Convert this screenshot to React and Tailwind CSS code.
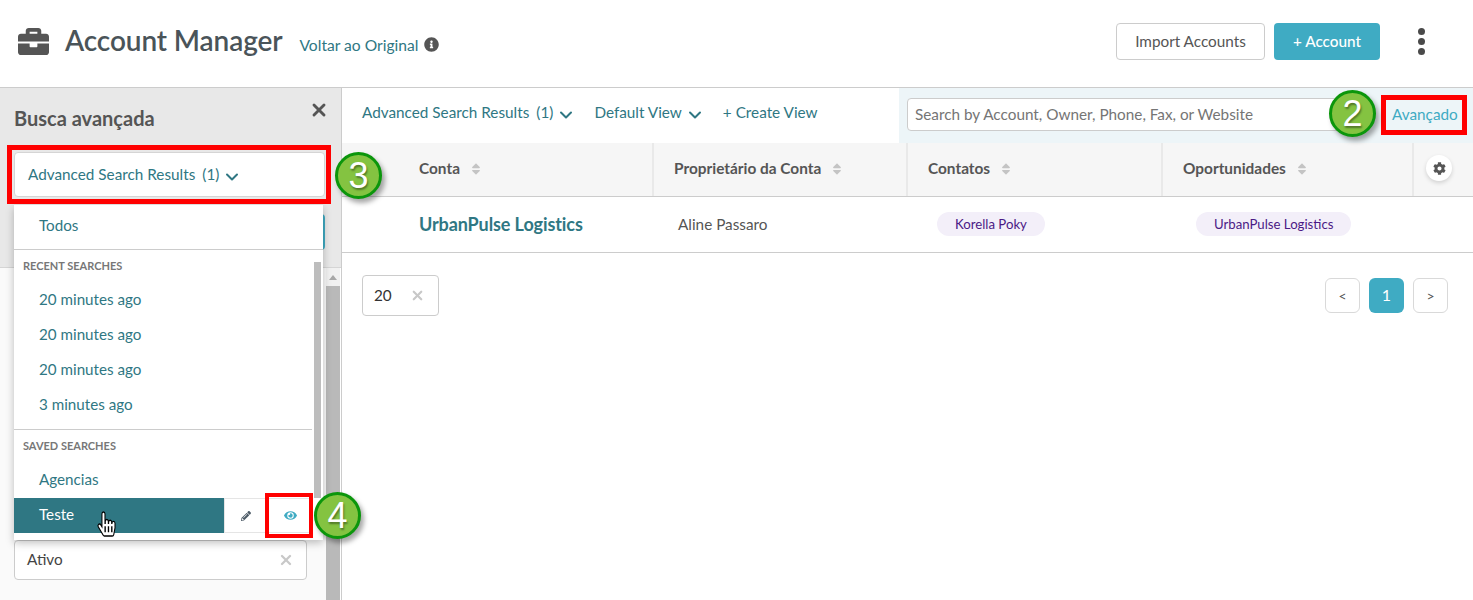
import { FaBriefcase, FaCog, FaEye, FaHandPointer, FaInfoCircle, FaPencilAlt, FaSort } from "react-icons/fa";
import { ChevronDown, X } from "lucide-react";

const teal = "text-[#2f7783]";

function Caret() {
  return <ChevronDown size={20} strokeWidth={2.4} className="ml-[3px] mt-[5px] text-[#2f7783]" />;
}

function Badge({ className, children }) {
  return (
    <div
      className={`absolute z-30 flex h-[47px] w-[47px] items-center justify-center rounded-full border-[3px] border-[#0c960c] bg-[#84c341] text-[36px] leading-none text-white shadow-[3px_4px_5px_rgba(0,0,0,0.35)] [font-family:'Liberation_Sans',sans-serif] [text-shadow:1px_2px_2px_rgba(0,0,0,0.4)] ${className}`}
    >
      {children}
    </div>
  );
}

function HeaderCell({ label, className = "" }) {
  return (
    <div className={`flex items-center gap-[9px] border-r-2 border-[#e9e9e9] pb-[1px] text-[15.4px] font-bold text-[#555] ${className}`}>
      {label}
      <FaSort size={14} className="text-[#c4c4c4]" />
    </div>
  );
}

function Pill({ children }) {
  return (
    <span className="inline-flex h-6 items-center rounded-full bg-[#f3eff9] px-[18px] text-[13.2px] text-[#4b1a86]">
      {children}
    </span>
  );
}

function PageButton({ children, active }) {
  return (
    <button
      className={`flex h-[35px] w-[35px] items-center justify-center rounded-md text-sm ${
        active ? "bg-[#3fabc3] text-[16px] text-white" : "border border-[#d9d9d9] bg-white text-[#555]"
      }`}
    >
      {children}
    </button>
  );
}

function MenuItem({ children, className = "" }) {
  return <div className={`flex h-[35px] items-center pl-[25px] text-[15.2px] ${teal} ${className}`}>{children}</div>;
}

function SearchMenu() {
  return (
    <div className="absolute left-[14px] top-[117px] z-20 w-[309px] bg-white shadow-[0_3px_8px_rgba(0,0,0,0.25)]">
      <div className={`flex h-[45px] items-center border-b border-[#ccc] pb-[3px] pl-[25px] text-[15.2px] ${teal}`}>Todos</div>
      <div className="relative flex">
        <div className="w-[298px]">
          <div className="flex h-[32px] items-center pl-[9px] text-[11px] font-bold text-[#777]">RECENT SEARCHES</div>
          <MenuItem>20 minutes ago</MenuItem>
          <MenuItem>20 minutes ago</MenuItem>
          <MenuItem>20 minutes ago</MenuItem>
          <MenuItem>3 minutes ago</MenuItem>
          <div className="mt-[7px] border-t border-[#ccc]" />
          <div className="flex h-[33px] items-center pl-[9px] text-[11px] font-bold text-[#777]">SAVED SEARCHES</div>
          <MenuItem className="pb-[2px]">Agencias</MenuItem>
          <div className="flex h-[35px] w-[298px]">
            <div className="flex w-[210px] items-center bg-[#2f7783] pb-[2px] pl-[25px] text-[15.2px] text-white">Teste</div>
            <div className="flex w-[41px] items-center justify-center border-y border-l border-[#e5e5e5] pl-[2px]">
              <FaPencilAlt size={10} className="text-[#4c5a66]" />
            </div>
            <div className="flex flex-1 items-center justify-center border-y border-[#e5e5e5] pb-[1px] pl-[3px]">
              <FaEye size={13} className="text-[#3fabc3]" />
            </div>
          </div>
          <div className="h-[7px]" />
        </div>
        <div className="mb-[42px] ml-[2px] mt-[12px] w-[7px] bg-[#bdbdbd]" />
      </div>
    </div>
  );
}

function Sidebar() {
  return (
    <aside className="relative flex w-[342px] shrink-0 flex-col border-r border-[#ccc]">
      <div className="h-[180px] border-b border-[#d5d5d5] bg-[#e8e8e8] px-[14px]">
        <div className="flex items-start justify-between">
          <h2 className="mt-[15px] text-[20px] font-bold text-[#555]">Busca avançada</h2>
          <X size={20} strokeWidth={3.5} className="mr-[-2px] mt-[12px] text-[#555]" />
        </div>
        <div className="mt-[19px] flex h-[45px] w-[311px] items-center rounded border border-[#d5d5d5] bg-white pb-[1px] pl-[13px] text-[15.3px] text-[#2f7783]">
          <span>Advanced Search Results</span>
          <span className="ml-[7px]">(1)</span>
          <Caret />
        </div>
        <div className="mt-[17px] h-[36px] w-[311px] rounded border-r-2 border-[#3fabc3] bg-white" />
      </div>
      <div className="flex min-h-0 flex-1">
        <div className="flex flex-1 flex-col bg-[#fafafa] pl-[14px] pr-[19px]">
          <div className="mt-[272px] flex h-[40px] items-center justify-between rounded border border-[#ccc] bg-white pb-[1px] pl-3 pr-[12px] text-[15.3px] text-[#444]">
            Ativo
            <X size={16} strokeWidth={3.5} className="text-[#c8c8c8]" />
          </div>
        </div>
        <div className="mr-[1px] flex w-[14px] flex-col bg-[#f1f1f1]">
          <div className="flex h-[18px] items-center justify-center">
            <div className="h-0 w-0 border-x-[4px] border-b-[5px] border-x-transparent border-b-[#a8a8a8]" />
          </div>
          <div className="flex-1 bg-[#b9b9b9]" />
        </div>
      </div>
      <SearchMenu />
    </aside>
  );
}

function Toolbar() {
  return (
    <div className="flex h-[55px] shrink-0">
      <div className={`flex w-[557px] items-center pb-[6px] pl-5 text-[15.3px] ${teal}`}>
        <span>Advanced Search Results</span>
        <span className="ml-[7px]">(1)</span>
        <Caret />
        <span className="ml-[18px]">Default View</span>
        <Caret />
        <span className="ml-[18px]">+ Create View</span>
      </div>
      <div className="flex flex-1 items-center bg-[#edf5f8] pb-[2px] pl-2">
        <div className="flex h-[33px] w-[440px] items-center rounded border border-[#ccc] bg-white pl-[7px] text-[15.3px] text-[#757575]">
          Search by Account, Owner, Phone, Fax, or Website
        </div>
        <span className="ml-[45px] text-[15.3px] text-[#3fabc3]">Avançado</span>
      </div>
    </div>
  );
}

function AccountsTable() {
  return (
    <div>
      <div className="grid h-[54px] grid-cols-[312px_254px_255px_251px_59px] border-b border-[#ccc] bg-[#f6f6f6]">
        <HeaderCell label="Conta" className="pl-[77px]" />
        <HeaderCell label="Proprietário da Conta" className="pl-5" />
        <HeaderCell label="Contatos" className="pl-5" />
        <HeaderCell label="Oportunidades" className="pl-5" />
        <div className="flex items-center justify-center pb-[3px] pr-[9px]">
          <div className="flex h-[26px] w-[26px] items-center justify-center rounded-full bg-white shadow-[0_2px_4px_rgba(0,0,0,0.15)]">
            <FaCog size={13} className="text-[#555]" />
          </div>
        </div>
      </div>
      <div className="grid h-[56px] grid-cols-[312px_254px_255px_251px_59px] items-center border-b border-[#ccc] pb-[1px] text-[15.3px]">
        <div className={`pl-[77px] text-[18px] font-bold tracking-[-0.1px] ${teal}`}>UrbanPulse Logistics</div>
        <div className="pl-6 text-[#555]">Aline Passaro</div>
        <div className="pl-[29px]"><Pill>Korella Poky</Pill></div>
        <div className="pl-[33px]"><Pill>UrbanPulse Logistics</Pill></div>
        <div />
      </div>
    </div>
  );
}

export default function App() {
  return (
    <div className="relative flex h-[600px] w-[1473px] flex-col overflow-hidden bg-white [font-family:Lato,sans-serif]">
      <header className="flex h-[88px] shrink-0 items-center border-b border-[#ccc] pb-[5px] pl-[18px] pr-[48px]">
        <FaBriefcase size={31} className="text-[#555]" />
        <h1 className="ml-4 pb-[2px] text-[28px] font-semibold tracking-[-0.1px] text-[#4a5459]">Account Manager</h1>
        <span className={`ml-[17px] mt-[9px] text-[15.6px] ${teal}`}>Voltar ao Original</span>
        <FaInfoCircle size={15} className="ml-[6px] mt-[7px] text-[#555]" />
        <div className="ml-auto flex items-center">
          <button className="h-[37px] w-[149px] rounded border border-[#ccc] bg-white text-[15.3px] text-[#555]">Import Accounts</button>
          <button className="ml-[9px] h-[37px] w-[106px] rounded bg-[#3fabc3] text-[15.3px] font-medium text-white">+ Account</button>
          <div className="ml-[38px] flex flex-col gap-[3px]">
            <span className="h-[7px] w-[7px] rounded-full bg-[#4a4a4a]" />
            <span className="h-[7px] w-[7px] rounded-full bg-[#4a4a4a]" />
            <span className="h-[7px] w-[7px] rounded-full bg-[#4a4a4a]" />
          </div>
        </div>
      </header>
      <div className="flex min-h-0 flex-1">
        <Sidebar />
        <main className="min-w-0 flex-1">
          <Toolbar />
          <AccountsTable />
          <div className="flex items-start justify-between pl-5 pr-[25px] pt-[22px]">
            <div className="flex h-[41px] w-[77px] items-center justify-between rounded border border-[#ccc] pl-[11px] pr-[13px] text-[15.3px] text-[#333]">
              20
              <X size={15} strokeWidth={3.5} className="text-[#c8c8c8]" />
            </div>
            <div className="mt-[3px] flex gap-[9px]">
              <PageButton>&lt;</PageButton>
              <PageButton active>1</PageButton>
              <PageButton>&gt;</PageButton>
            </div>
          </div>
        </main>
      </div>

      <div className="absolute left-[7px] top-[145px] z-30 h-[59px] w-[324px] border-[5px] border-[#ff0000]" />
      <div className="absolute left-[265px] top-[493px] z-30 h-[45px] w-[48px] border-[4px] border-[#ff0000]" />
      <div className="absolute left-[1381px] top-[95px] z-30 h-[40px] w-[86px] border-[5px] border-[#ff0000]" />
      <Badge className="left-[1329px] top-[90px]">2</Badge>
      <Badge className="left-[335px] top-[152px]">3</Badge>
      <Badge className="left-[314px] top-[492px]">4</Badge>
      <FaHandPointer
        preserveAspectRatio="none"
        stroke="black"
        strokeWidth={28}
        className="absolute left-[98px] top-[512px] z-30 h-[24px] w-[17px] overflow-visible text-white"
      />
    </div>
  );
}
